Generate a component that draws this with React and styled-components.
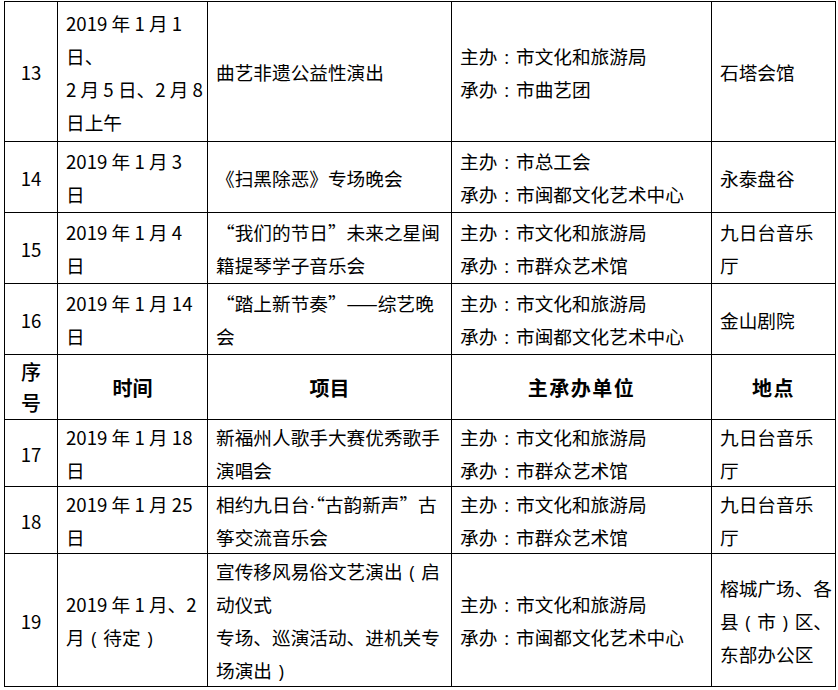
import React from "react";
import styled, { createGlobalStyle } from "styled-components";

const GlobalStyle = createGlobalStyle`
  body {
    margin: 0;
    background: #fff;
    font-family: "Noto Sans CJK SC", "Open Sans", sans-serif;
    color: #000;
  }
`;

const Table = styled.table`
  margin: 1px 0 0 4px;
  border-collapse: collapse;
  table-layout: fixed;
  width: 831px;
`;

const Row = styled.tr`
  height: ${(p) => p.h}px;
`;

const Cell = styled.td`
  border: 1px solid #000;
  padding: 0 ${(p) => (p.center ? 0 : 8)}px;
  vertical-align: middle;
  text-align: ${(p) => (p.center ? "center" : "left")};
  font-size: 18.67px;
  line-height: 33px;
  white-space: nowrap;
  overflow: hidden;
`;

const HeadCell = styled.td`
  border: 1px solid #000;
  padding: 0;
  vertical-align: middle;
  text-align: center;
  font-size: 20px;
  line-height: 31px;
  font-weight: ${(p) => (p.light ? 500 : 700)};
  letter-spacing: ${(p) => (p.spread ? "1.5px" : "0")};
`;

const Line = styled.div`
  height: 33px;
`;

// full-width punctuation drawn centred in its em box
const Punct = styled.span`
  display: inline-block;
  width: 1em;
  line-height: 1;
  text-align: center;
  font-family: "Open Sans", sans-serif;
`;

const Dot = styled.span`
  line-height: 1;
  font-family: "Liberation Sans", sans-serif;
`;

const widths = [53, 150, 244, 260, 124];

const rows = [
  {
    no: "13",
    h: 140,
    date: ["2019 年 1 月 1", "日、", "2 月 5 日、2 月 8", "日上午"],
    item: ["曲艺非遗公益性演出"],
    host: ["主办：市文化和旅游局", "承办：市曲艺团"],
    place: ["石塔会馆"],
  },
  {
    no: "14",
    h: 71,
    date: ["2019 年 1 月 3", "日"],
    item: ["《扫黑除恶》专场晚会"],
    host: ["主办：市总工会", "承办：市闽都文化艺术中心"],
    place: ["永泰盘谷"],
  },
  {
    no: "15",
    h: 71,
    date: ["2019 年 1 月 4", "日"],
    item: ["“我们的节日”未来之星闽", "籍提琴学子音乐会"],
    host: ["主办：市文化和旅游局", "承办：市群众艺术馆"],
    place: ["九日台音乐", "厅"],
  },
  {
    no: "16",
    h: 71,
    date: ["2019 年 1 月 14", "日"],
    item: ["“踏上新节奏”——综艺晚", "会"],
    host: ["主办：市文化和旅游局", "承办：市闽都文化艺术中心"],
    place: ["金山剧院"],
  },
  { header: true, h: 65 },
  {
    no: "17",
    h: 67,
    date: ["2019 年 1 月 18", "日"],
    item: ["新福州人歌手大赛优秀歌手", "演唱会"],
    host: ["主办：市文化和旅游局", "承办：市群众艺术馆"],
    place: ["九日台音乐", "厅"],
  },
  {
    no: "18",
    h: 67,
    date: ["2019 年 1 月 25", "日"],
    item: ["相约九日台·“古韵新声”古", "筝交流音乐会"],
    host: ["主办：市文化和旅游局", "承办：市群众艺术馆"],
    place: ["九日台音乐", "厅"],
  },
  {
    no: "19",
    h: 133,
    date: ["2019 年 1 月、2", "月（待定）"],
    item: ["宣传移风易俗文艺演出（启", "动仪式", "专场、巡演活动、进机关专", "场演出）"],
    host: ["主办：市文化和旅游局", "承办：市闽都文化艺术中心"],
    place: ["榕城广场、各", "县（市）区、", "东部办公区"],
  },
];

const half = { "：": ":", "（": "(", "）": ")" };

function renderText(text) {
  return text.split(/([：（）·])/).map((part, i) => {
    if (half[part]) return <Punct key={i}>{half[part]}</Punct>;
    if (part === "·") return <Dot key={i}>·</Dot>;
    return part;
  });
}

const Lines = ({ items }) =>
  items.map((t, i) => <Line key={i}>{renderText(t)}</Line>);

export default function App() {
  return (
    <>
      <GlobalStyle />
      <Table>
        <colgroup>
          {widths.map((w, i) => (
            <col key={i} style={{ width: w }} />
          ))}
        </colgroup>
        <tbody>
          {rows.map((r, i) =>
            r.header ? (
              <Row key={i} h={r.h}>
                <HeadCell light>
                  序<br />号
                </HeadCell>
                <HeadCell>时间</HeadCell>
                <HeadCell>项目</HeadCell>
                <HeadCell spread>主承办单位</HeadCell>
                <HeadCell spread>地点</HeadCell>
              </Row>
            ) : (
              <Row key={i} h={r.h}>
                <Cell center>{r.no}</Cell>
                <Cell>
                  <Lines items={r.date} />
                </Cell>
                <Cell>
                  <Lines items={r.item} />
                </Cell>
                <Cell>
                  <Lines items={r.host} />
                </Cell>
                <Cell>
                  <Lines items={r.place} />
                </Cell>
              </Row>
            )
          )}
        </tbody>
      </Table>
    </>
  );
}
